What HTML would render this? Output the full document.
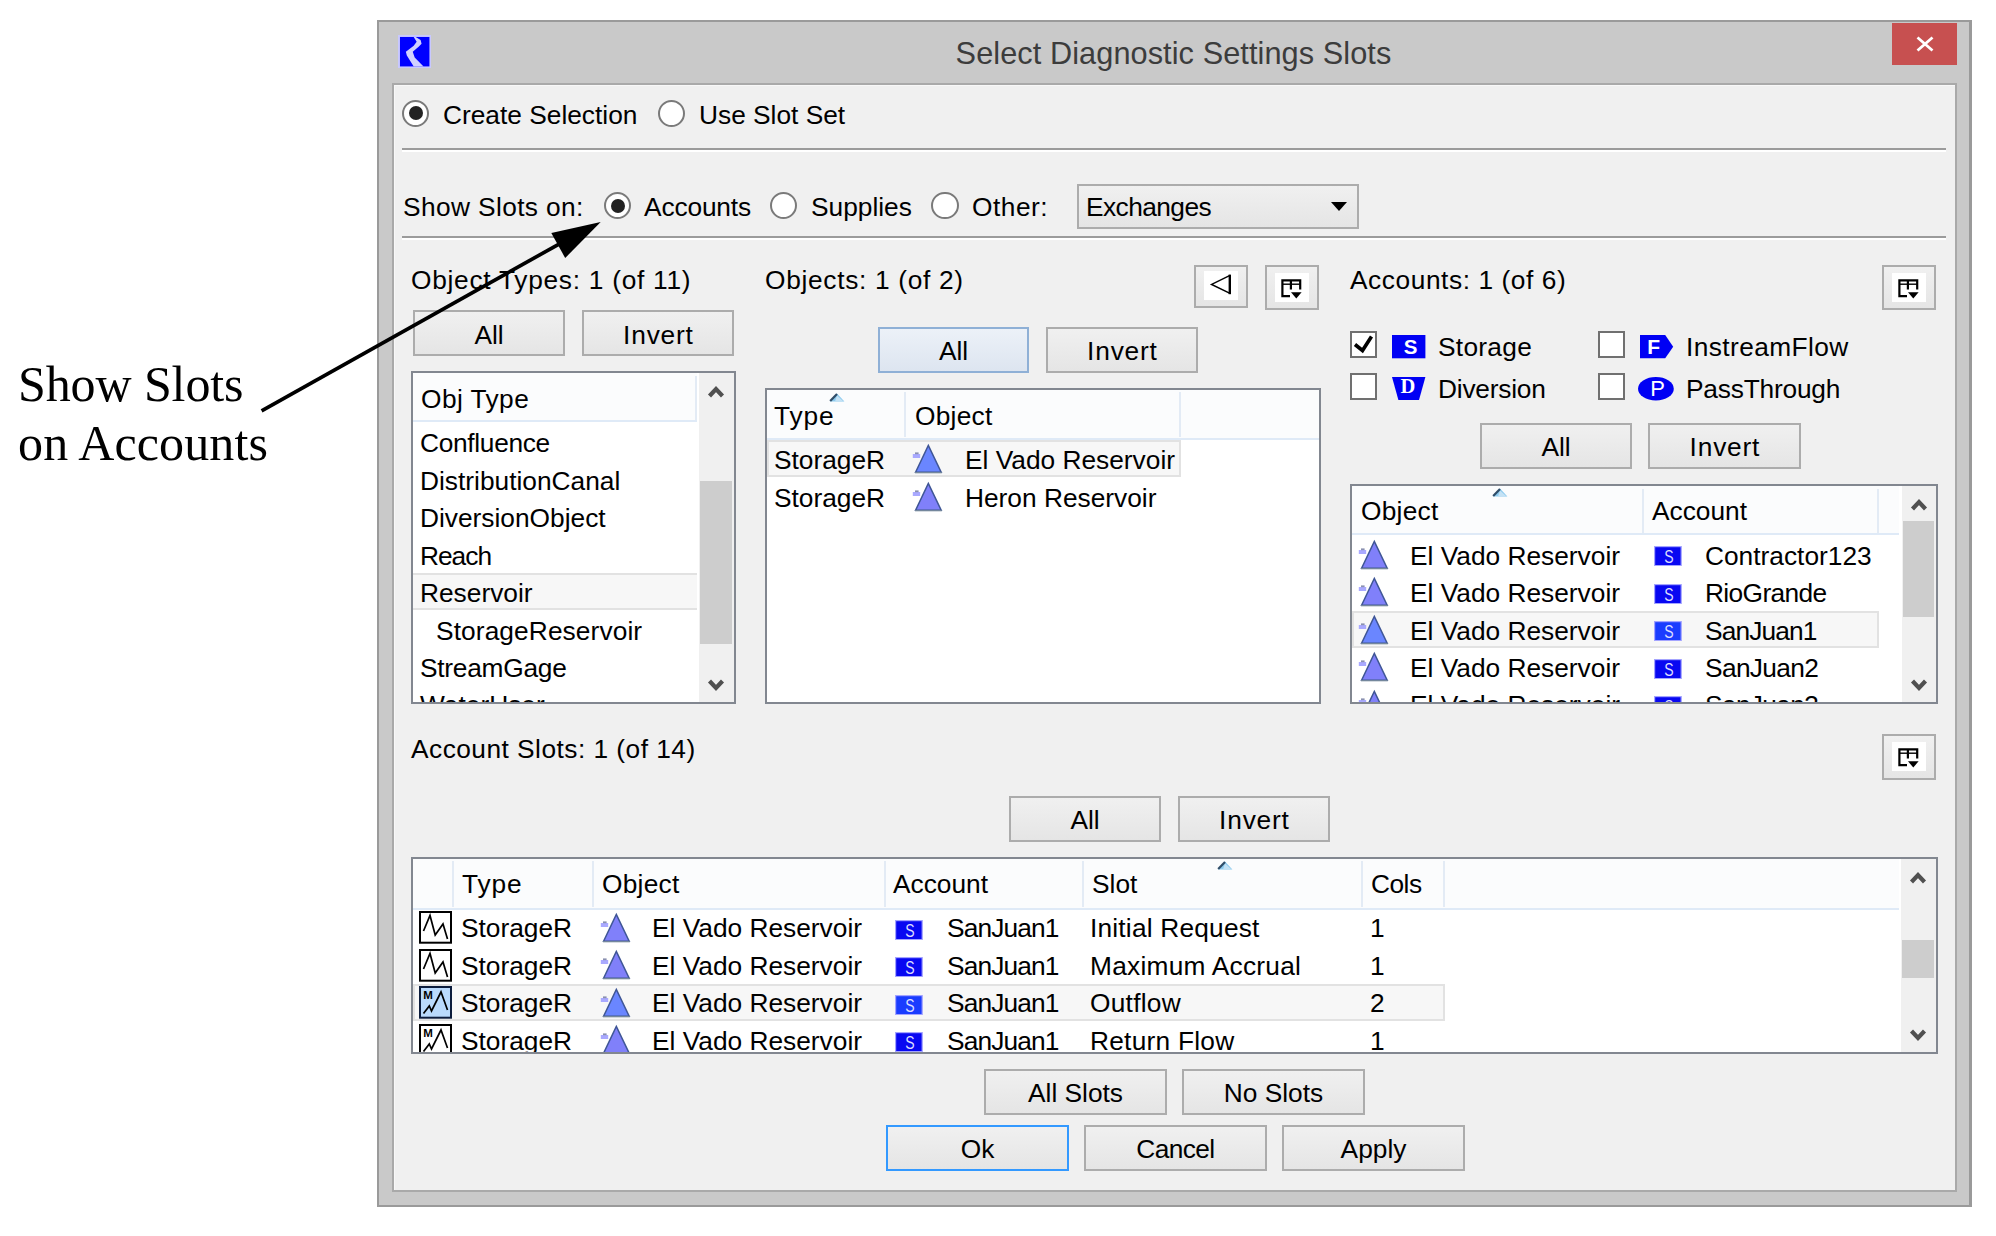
<!DOCTYPE html>
<html><head><meta charset="utf-8"><title>Select Diagnostic Settings Slots</title>
<style>
html,body{margin:0;padding:0;background:#fff;overflow:hidden;}
#root{position:relative;width:1996px;height:1236px;overflow:hidden;background:#fff;font-family:"Liberation Sans",sans-serif;}
#root div,#root span,#root svg.a{position:absolute;box-sizing:border-box;}
.t{font-size:26.3px;line-height:32px;height:32px;color:#000;white-space:pre;}
.c{text-align:center;}
.title{font-size:30.7px;color:#3c3c3c;}
.serif{font-family:"Liberation Serif",serif;font-size:50px;line-height:60px;height:60px;color:#000;white-space:pre;}
.btn{border:2px solid #acacac;background:linear-gradient(#f0f0f0,#e5e5e5);}
.btn.hot{border-color:#8fb0d6;background:linear-gradient(#ecf1f8,#dde5f0);}
.btn.def{border-color:#3399ff;}
.radio{border:2px solid #7a7a7a;border-radius:50%;background:#fff;}
.radio i{position:absolute;left:4.7px;top:4.7px;width:14px;height:14px;border-radius:50%;background:#222;}
.chk{border:2px solid #707070;background:#fff;}
.list{border:2px solid #828790;background:#fff;overflow:hidden;}
.hdr{background:#fbfcfd;border-bottom:2px solid #dfeaf7;}
.sel{background:#f7f7f7;border:2px solid #e2e2e2;}
.vsep{background:#e3ebf5;}
.sb{background:#f0f0f0;}
.thumb{background:#cdcdcd;}
.hline{background:#fff;border-top:2px solid #9b9b9b;}

</style></head><body>
<div id="root">
<div style="left:377px;top:20px;width:1595px;height:1187px;background:#c9c9c9;border:2px solid #9a9a9a;border-right-width:3px;"></div>
<div style="left:392px;top:83px;width:1565px;height:1109px;background:#f0f0f0;border:2px solid #a9a9a9;box-shadow:inset 1px 1px 0 #f8f8f8;"></div>
<svg class="a" style="left:398px;top:35px" width="33.4" height="33.4" viewBox="0 0 34 34"><rect width="34" height="34" fill="#c8c8ff"/><rect x="2" y="2" width="30" height="30" fill="#0000ff"/><path d="M18 2 L23 5 L24 9 L21 12 L15 17 L17 23 L26 32 L16 32 L9 21 L8 17 L16 11 L19 7 L16 2 Z" fill="#d0d0ff"/></svg>
<span class="t title c" style="left:391px;width:1565px;top:38px;letter-spacing:0.08px;">Select Diagnostic Settings Slots</span>
<div style="left:1892px;top:23px;width:64.5px;height:41.5px;background:#c75050;"></div>
<svg class="a" style="left:1915.5px;top:36px" width="18" height="16" viewBox="0 0 18 16"><path d="M1.5 1.5 L16.5 14.5 M16.5 1.5 L1.5 14.5" stroke="#fff" stroke-width="2.8" fill="none"/></svg>
<div class="radio" style="left:402px;top:99.8px;width:27.4px;height:27.4px;"><i></i></div>
<span class="t" style="left:443px;top:99px;">Create Selection</span>
<div class="radio" style="left:658px;top:99.8px;width:27.4px;height:27.4px;"></div>
<span class="t" style="left:699px;top:99px;">Use Slot Set</span>
<div class="hline" style="left:402px;top:148px;width:1544px;height:4px;"></div>
<span class="t" style="left:403px;top:191px;letter-spacing:0.385px;">Show Slots on:</span>
<div class="radio" style="left:604px;top:192px;width:27.4px;height:27.4px;"><i></i></div>
<span class="t" style="left:644px;top:191px;letter-spacing:-0.143px;">Accounts</span>
<div class="radio" style="left:770px;top:192px;width:27.4px;height:27.4px;"></div>
<span class="t" style="left:811px;top:191px;">Supplies</span>
<div class="radio" style="left:931.3px;top:192px;width:27.4px;height:27.4px;"></div>
<span class="t" style="left:972px;top:191px;letter-spacing:0.500px;">Other:</span>
<div class="btn" style="left:1077px;top:183.5px;width:281.5px;height:45.5px;"></div>
<span class="t" style="left:1086px;top:191px;letter-spacing:-0.562px;">Exchanges</span>
<svg class="a" style="left:1330px;top:202px" width="18" height="10" viewBox="0 0 18 10"><path d="M1 0 L17 0 L9 9 Z" fill="#000"/></svg>
<div class="hline" style="left:402px;top:236px;width:1544px;height:4px;"></div>
<span class="t" style="left:411px;top:264px;letter-spacing:0.727px;">Object Types: 1 (of 11)</span>
<span class="t" style="left:765px;top:264px;letter-spacing:0.688px;">Objects: 1 (of 2)</span>
<span class="t" style="left:1350px;top:264px;letter-spacing:0.565px;">Accounts: 1 (of 6)</span>
<div class="btn" style="left:1194.2px;top:264.8px;width:53.8px;height:43.2px;"></div>
<div style="left:1204.4px;top:270.9px;width:33.6px;height:29.2px;background:#fff;"></div>
<svg class="a" style="left:1208px;top:272px" width="26" height="26" viewBox="0 0 26 26"><path d="M22 3.4 L3.6 12.4 L22 21.4" stroke="#000" stroke-width="1.5" fill="none"/><path d="M21.8 2.6 V22.2" stroke="#000" stroke-width="2.4" fill="none"/></svg>
<div class="btn" style="left:1265px;top:264.8px;width:54px;height:45.5px;"></div>
<div style="left:1275px;top:272.8px;width:33.5px;height:29.2px;background:#fff;"></div>
<svg class="a" style="left:1280px;top:277.8px" width="24" height="22" viewBox="0 0 24 22"><path d="M2.4 2.4 H20.2 V11.5 M2.4 1.3 V18.2 H10 M10.9 2.4 V11.5" stroke="#000" stroke-width="2.2" fill="none"/><path d="M2.4 6.2 H20.2" stroke="#000" stroke-width="1.4" fill="none"/><path d="M11 14.3 H21.6 L16.3 20.4 Z" fill="#000"/></svg>
<div class="btn" style="left:1882px;top:264.8px;width:54px;height:45.5px;"></div>
<div style="left:1892px;top:272.8px;width:33.5px;height:29.2px;background:#fff;"></div>
<svg class="a" style="left:1897px;top:277.8px" width="24" height="22" viewBox="0 0 24 22"><path d="M2.4 2.4 H20.2 V11.5 M2.4 1.3 V18.2 H10 M10.9 2.4 V11.5" stroke="#000" stroke-width="2.2" fill="none"/><path d="M2.4 6.2 H20.2" stroke="#000" stroke-width="1.4" fill="none"/><path d="M11 14.3 H21.6 L16.3 20.4 Z" fill="#000"/></svg>
<div class="btn" style="left:1882px;top:734px;width:54px;height:45.5px;"></div>
<div style="left:1892px;top:742px;width:33.5px;height:29.2px;background:#fff;"></div>
<svg class="a" style="left:1897px;top:747px" width="24" height="22" viewBox="0 0 24 22"><path d="M2.4 2.4 H20.2 V11.5 M2.4 1.3 V18.2 H10 M10.9 2.4 V11.5" stroke="#000" stroke-width="2.2" fill="none"/><path d="M2.4 6.2 H20.2" stroke="#000" stroke-width="1.4" fill="none"/><path d="M11 14.3 H21.6 L16.3 20.4 Z" fill="#000"/></svg>
<div class="btn " style="left:413px;top:310px;width:152px;height:46px;"></div>
<span class="t c" style="left:413px;width:152px;top:319px;">All</span>
<div class="btn " style="left:582px;top:310px;width:152px;height:46px;"></div>
<span class="t c" style="left:582px;width:152px;top:319px;letter-spacing:0.800px;padding-left:0.800px;">Invert</span>
<div class="list" style="left:411px;top:371px;width:324.7px;height:333px;"></div>
<div class="hdr" style="left:413px;top:373px;width:284px;height:49px;"></div>
<div class="vsep" style="left:695px;top:376px;width:2px;height:44px;"></div>
<span class="t" style="left:421px;top:383px;letter-spacing:0.429px;">Obj Type</span>
<div class="sel" style="left:413px;top:573px;width:284px;height:37px;border-left:0;border-right:0;"></div>
<span class="t" style="left:420px;top:427px;letter-spacing:-0.311px;">Confluence</span>
<span class="t" style="left:420px;top:465px;">DistributionCanal</span>
<span class="t" style="left:420px;top:502px;">DiversionObject</span>
<span class="t" style="left:420px;top:540px;letter-spacing:-1.000px;">Reach</span>
<span class="t" style="left:420px;top:577px;">Reservoir</span>
<span class="t" style="left:436px;top:615px;letter-spacing:0.100px;">StorageReservoir</span>
<span class="t" style="left:420px;top:652px;letter-spacing:-0.256px;">StreamGage</span>
<div style="left:413px;top:686px;width:284px;height:16px;overflow:hidden"><span class="t" style="left:7px;top:3px">WaterUser</span></div>
<div class="sb" style="left:699px;top:373px;width:34.7px;height:329px;"></div>
<div class="thumb" style="left:699.5px;top:481px;width:32.7px;height:163px;"></div>
<svg class="a" style="left:707.35px;top:384px" width="18" height="14" viewBox="0 0 18 14"><path d="M2.5 12 L9 5 L15.5 12" stroke="#505050" stroke-width="4.2" fill="none"/></svg>
<svg class="a" style="left:707.35px;top:678.5px" width="18" height="14" viewBox="0 0 18 14"><path d="M2.5 2 L9 9 L15.5 2" stroke="#505050" stroke-width="4.2" fill="none"/></svg>
<div class="btn hot" style="left:878px;top:327px;width:151px;height:46px;"></div>
<span class="t c" style="left:878px;width:151px;top:335px;">All</span>
<div class="btn " style="left:1046px;top:327px;width:152px;height:46px;"></div>
<span class="t c" style="left:1046px;width:152px;top:335px;letter-spacing:0.800px;padding-left:0.800px;">Invert</span>
<div class="list" style="left:765px;top:388px;width:556px;height:316px;"></div>
<div class="hdr" style="left:767px;top:390px;width:552px;height:49.6px;"></div>
<div class="vsep" style="left:904px;top:392px;width:2px;height:45px;"></div>
<div class="vsep" style="left:1179px;top:392px;width:2px;height:45px;"></div>
<span class="t" style="left:774px;top:400px;letter-spacing:0.833px;">Type</span>
<span class="t" style="left:915px;top:400px;letter-spacing:0.240px;">Object</span>
<svg class="a" style="left:828.9px;top:392.5px" width="16" height="9" viewBox="0 0 16 9"><path d="M0.8 8.6 L8 0.6 L15.4 8.6 Z" fill="#8ccaee"/><path d="M8 2.5 L14.6 8.6 H6 Z" fill="#c4e2f5"/><path d="M1.2 8 L8 0.9" stroke="#2f4d68" stroke-width="2.2" fill="none"/></svg>
<div class="sel" style="left:767px;top:440.2px;width:414px;height:36.6px;"></div>
<span class="t" style="left:774px;top:444px;">StorageR</span>
<svg class="a" style="left:911px;top:442px" width="34" height="34" viewBox="0 0 34 34"><rect x="1.8" y="12" width="7.4" height="4" fill="#a9a9ff"/><rect x="4" y="10.4" width="3.6" height="1.8" fill="#8a90b0"/><path d="M17.3 3.4 L30.2 30.2 L4.6 30.2 Z" fill="#6a86ff" stroke="#3f5696" stroke-width="1.5" stroke-linejoin="miter"/><path d="M4 30.6 H30.8" stroke="#74879c" stroke-width="1.4"/></svg>
<span class="t" style="left:965px;top:444px;">El Vado Reservoir</span>
<span class="t" style="left:774px;top:482px;">StorageR</span>
<svg class="a" style="left:911px;top:479.6px" width="34" height="34" viewBox="0 0 34 34"><rect x="1.8" y="12" width="7.4" height="4" fill="#a9a9ff"/><rect x="4" y="10.4" width="3.6" height="1.8" fill="#8a90b0"/><path d="M17.3 3.4 L30.2 30.2 L4.6 30.2 Z" fill="#8080fa" stroke="#3f5696" stroke-width="1.5" stroke-linejoin="miter"/><path d="M4 30.6 H30.8" stroke="#74879c" stroke-width="1.4"/></svg>
<span class="t" style="left:965px;top:482px;">Heron Reservoir</span>
<div class="chk" style="left:1350.3px;top:331.2px;width:27px;height:27px;"><svg width="23" height="23" viewBox="0 0 23 23" style="position:absolute;left:0;top:0"><path d="M3 11.5 L10.5 17.5 L19.5 3.5" fill="none" stroke="#000" stroke-width="3.6"/></svg></div>
<svg class="a" style="left:1391.9px;top:335px" width="34" height="24" viewBox="0 0 34 24"><rect x="0" y="0" width="33.4" height="23.3" fill="#0000f4"/><text x="18.6" y="18.8" text-anchor="middle" font-family="Liberation Sans, sans-serif" font-weight="bold" font-size="20.5" fill="#fff">S</text></svg>
<span class="t" style="left:1438px;top:331px;letter-spacing:0.283px;">Storage</span>
<div class="chk" style="left:1598.2px;top:331.2px;width:27px;height:27px;"></div>
<svg class="a" style="left:1639.9px;top:335px" width="34" height="24" viewBox="0 0 34 24"><path d="M0 0 H25.2 L33.2 11.7 L25.2 23.3 H0 Z" fill="#0000f4"/><text x="13.7" y="18.8" text-anchor="middle" font-family="Liberation Sans, sans-serif" font-weight="bold" font-size="21" fill="#fff">F</text></svg>
<span class="t" style="left:1686px;top:331px;letter-spacing:0.400px;">InstreamFlow</span>
<div class="chk" style="left:1350.3px;top:373.1px;width:27px;height:27px;"></div>
<svg class="a" style="left:1391.9px;top:377px" width="34" height="24" viewBox="0 0 34 24"><path d="M0 0 H33.4 L27 23 H6.4 Z" fill="#0000f4"/><text x="15.8" y="16.4" text-anchor="middle" font-family="Liberation Serif, serif" font-weight="bold" font-size="20.5" fill="#fff">D</text></svg>
<span class="t" style="left:1438px;top:373px;letter-spacing:-0.212px;">Diversion</span>
<div class="chk" style="left:1598.2px;top:373.1px;width:27px;height:27px;"></div>
<svg class="a" style="left:1637.7px;top:376.8px" width="36" height="24" viewBox="0 0 36 24"><ellipse cx="17.9" cy="11.7" rx="17.9" ry="11.7" fill="#0000f4"/><text x="19.5" y="19.3" text-anchor="middle" font-family="Liberation Sans, sans-serif" font-weight="normal" font-size="22" fill="#fff">P</text></svg>
<span class="t" style="left:1686px;top:373px;letter-spacing:-0.200px;">PassThrough</span>
<div class="btn " style="left:1480px;top:423px;width:152px;height:46px;"></div>
<span class="t c" style="left:1480px;width:152px;top:431px;">All</span>
<div class="btn " style="left:1648px;top:423px;width:153px;height:46px;"></div>
<span class="t c" style="left:1648px;width:153px;top:431px;letter-spacing:0.800px;padding-left:0.800px;">Invert</span>
<div class="list" style="left:1350px;top:484px;width:587.5px;height:220px;"></div>
<div class="hdr" style="left:1352px;top:486px;width:547px;height:49px;"></div>
<div class="vsep" style="left:1642px;top:489px;width:2px;height:44px;"></div>
<div class="vsep" style="left:1877px;top:489px;width:2px;height:44px;"></div>
<span class="t" style="left:1361px;top:495px;letter-spacing:0.240px;">Object</span>
<span class="t" style="left:1652px;top:495px;">Account</span>
<svg class="a" style="left:1491.6px;top:488px" width="16" height="9" viewBox="0 0 16 9"><path d="M0.8 8.6 L8 0.6 L15.4 8.6 Z" fill="#8ccaee"/><path d="M8 2.5 L14.6 8.6 H6 Z" fill="#c4e2f5"/><path d="M1.2 8 L8 0.9" stroke="#2f4d68" stroke-width="2.2" fill="none"/></svg>
<div class="sel" style="left:1352px;top:610.5px;width:527px;height:37.5px;"></div>
<svg class="a" style="left:1356.7px;top:537.5px" width="34" height="34" viewBox="0 0 34 34"><rect x="1.8" y="12" width="7.4" height="4" fill="#a9a9ff"/><rect x="4" y="10.4" width="3.6" height="1.8" fill="#8a90b0"/><path d="M17.3 3.4 L30.2 30.2 L4.6 30.2 Z" fill="#8080fa" stroke="#3f5696" stroke-width="1.5" stroke-linejoin="miter"/><path d="M4 30.6 H30.8" stroke="#74879c" stroke-width="1.4"/></svg>
<span class="t" style="left:1410px;top:540px;">El Vado Reservoir</span>
<svg class="a" style="left:1654.3px;top:546.3px" width="28" height="20" viewBox="0 0 28 20"><rect x="0.6" y="0.6" width="26.6" height="19" fill="#0808f2" stroke="#a4a4ff" stroke-width="1.2"/><text transform="translate(15 16.6) scale(0.74 1)" x="0" y="0" text-anchor="middle" font-family="Liberation Sans, sans-serif" font-size="19" fill="#dcdcff">S</text></svg>
<span class="t" style="left:1705px;top:540px;">Contractor123</span>
<svg class="a" style="left:1356.7px;top:575px" width="34" height="34" viewBox="0 0 34 34"><rect x="1.8" y="12" width="7.4" height="4" fill="#a9a9ff"/><rect x="4" y="10.4" width="3.6" height="1.8" fill="#8a90b0"/><path d="M17.3 3.4 L30.2 30.2 L4.6 30.2 Z" fill="#8080fa" stroke="#3f5696" stroke-width="1.5" stroke-linejoin="miter"/><path d="M4 30.6 H30.8" stroke="#74879c" stroke-width="1.4"/></svg>
<span class="t" style="left:1410px;top:577px;">El Vado Reservoir</span>
<svg class="a" style="left:1654.3px;top:583.8px" width="28" height="20" viewBox="0 0 28 20"><rect x="0.6" y="0.6" width="26.6" height="19" fill="#0808f2" stroke="#a4a4ff" stroke-width="1.2"/><text transform="translate(15 16.6) scale(0.74 1)" x="0" y="0" text-anchor="middle" font-family="Liberation Sans, sans-serif" font-size="19" fill="#dcdcff">S</text></svg>
<span class="t" style="left:1705px;top:577px;letter-spacing:-0.625px;">RioGrande</span>
<svg class="a" style="left:1356.7px;top:612.5px" width="34" height="34" viewBox="0 0 34 34"><rect x="1.8" y="12" width="7.4" height="4" fill="#a9a9ff"/><rect x="4" y="10.4" width="3.6" height="1.8" fill="#8a90b0"/><path d="M17.3 3.4 L30.2 30.2 L4.6 30.2 Z" fill="#6a86ff" stroke="#3f5696" stroke-width="1.5" stroke-linejoin="miter"/><path d="M4 30.6 H30.8" stroke="#74879c" stroke-width="1.4"/></svg>
<span class="t" style="left:1410px;top:615px;">El Vado Reservoir</span>
<svg class="a" style="left:1654.3px;top:621.3px" width="28" height="20" viewBox="0 0 28 20"><rect x="0.6" y="0.6" width="26.6" height="19" fill="#1a3cff" stroke="#a4a4ff" stroke-width="1.2"/><text transform="translate(15 16.6) scale(0.74 1)" x="0" y="0" text-anchor="middle" font-family="Liberation Sans, sans-serif" font-size="19" fill="#dcdcff">S</text></svg>
<span class="t" style="left:1705px;top:615px;letter-spacing:-0.857px;">SanJuan1</span>
<svg class="a" style="left:1356.7px;top:650px" width="34" height="34" viewBox="0 0 34 34"><rect x="1.8" y="12" width="7.4" height="4" fill="#a9a9ff"/><rect x="4" y="10.4" width="3.6" height="1.8" fill="#8a90b0"/><path d="M17.3 3.4 L30.2 30.2 L4.6 30.2 Z" fill="#8080fa" stroke="#3f5696" stroke-width="1.5" stroke-linejoin="miter"/><path d="M4 30.6 H30.8" stroke="#74879c" stroke-width="1.4"/></svg>
<span class="t" style="left:1410px;top:652px;">El Vado Reservoir</span>
<svg class="a" style="left:1654.3px;top:658.8px" width="28" height="20" viewBox="0 0 28 20"><rect x="0.6" y="0.6" width="26.6" height="19" fill="#0808f2" stroke="#a4a4ff" stroke-width="1.2"/><text transform="translate(15 16.6) scale(0.74 1)" x="0" y="0" text-anchor="middle" font-family="Liberation Sans, sans-serif" font-size="19" fill="#dcdcff">S</text></svg>
<span class="t" style="left:1705px;top:652px;letter-spacing:-0.643px;">SanJuan2</span>
<div style="left:1352.5px;top:687px;width:546px;height:15px;overflow:hidden"><span class="t" style="left:57.5px;top:2px">El Vado Reservoir</span><span class="t" style="left:352.5px;top:2px;letter-spacing:-0.643px;">SanJuan3</span><svg class="a" style="left:4.2px;top:0.5px" width="34" height="34" viewBox="0 0 34 34"><rect x="1.8" y="12" width="7.4" height="4" fill="#a9a9ff"/><rect x="4" y="10.4" width="3.6" height="1.8" fill="#8a90b0"/><path d="M17.3 3.4 L30.2 30.2 L4.6 30.2 Z" fill="#8080fa" stroke="#3f5696" stroke-width="1.5" stroke-linejoin="miter"/><path d="M4 30.6 H30.8" stroke="#74879c" stroke-width="1.4"/></svg><svg class="a" style="left:301.8px;top:9.3px" width="28" height="20" viewBox="0 0 28 20"><rect x="0.6" y="0.6" width="26.6" height="19" fill="#0808f2" stroke="#a4a4ff" stroke-width="1.2"/><text transform="translate(15 16.6) scale(0.74 1)" x="0" y="0" text-anchor="middle" font-family="Liberation Sans, sans-serif" font-size="19" fill="#dcdcff">S</text></svg></div>
<div class="sb" style="left:1902px;top:486px;width:33.5px;height:216px;"></div>
<div class="thumb" style="left:1902.5px;top:521px;width:31.5px;height:96px;"></div>
<svg class="a" style="left:1909.75px;top:497px" width="18" height="14" viewBox="0 0 18 14"><path d="M2.5 12 L9 5 L15.5 12" stroke="#505050" stroke-width="4.2" fill="none"/></svg>
<svg class="a" style="left:1909.75px;top:678.5px" width="18" height="14" viewBox="0 0 18 14"><path d="M2.5 2 L9 9 L15.5 2" stroke="#505050" stroke-width="4.2" fill="none"/></svg>
<span class="t" style="left:411px;top:733px;letter-spacing:0.470px;">Account Slots: 1 (of 14)</span>
<div class="btn " style="left:1009px;top:796px;width:152px;height:46px;"></div>
<span class="t c" style="left:1009px;width:152px;top:804px;">All</span>
<div class="btn " style="left:1178px;top:796px;width:152px;height:46px;"></div>
<span class="t c" style="left:1178px;width:152px;top:804px;letter-spacing:0.800px;padding-left:0.800px;">Invert</span>
<div class="list" style="left:411px;top:857px;width:1526.5px;height:197.3px;"></div>
<div class="hdr" style="left:413px;top:859px;width:1486px;height:50.5px;"></div>
<div class="vsep" style="left:452px;top:861px;width:2px;height:46px;"></div>
<div class="vsep" style="left:592px;top:861px;width:2px;height:46px;"></div>
<div class="vsep" style="left:884px;top:861px;width:2px;height:46px;"></div>
<div class="vsep" style="left:1082px;top:861px;width:2px;height:46px;"></div>
<div class="vsep" style="left:1361px;top:861px;width:2px;height:46px;"></div>
<div class="vsep" style="left:1443px;top:861px;width:2px;height:46px;"></div>
<span class="t" style="left:462px;top:868px;letter-spacing:0.833px;">Type</span>
<span class="t" style="left:602px;top:868px;letter-spacing:0.240px;">Object</span>
<span class="t" style="left:893px;top:868px;">Account</span>
<span class="t" style="left:1092px;top:868px;">Slot</span>
<span class="t" style="left:1371px;top:868px;letter-spacing:-0.500px;">Cols</span>
<svg class="a" style="left:1216.6px;top:861px" width="16" height="9" viewBox="0 0 16 9"><path d="M0.8 8.6 L8 0.6 L15.4 8.6 Z" fill="#8ccaee"/><path d="M8 2.5 L14.6 8.6 H6 Z" fill="#c4e2f5"/><path d="M1.2 8 L8 0.9" stroke="#2f4d68" stroke-width="2.2" fill="none"/></svg>
<div class="sel" style="left:413px;top:984px;width:1032px;height:37px;"></div>
<div style="left:413px;top:909.5px;width:1486px;height:142.8px;overflow:hidden">
<div style="left:0;top:-0.2px;width:1486px;height:38px"><svg class="a" style="left:6.2px;top:1.8px" width="33" height="33" viewBox="0 0 33 33"><rect x="1" y="1" width="31" height="30.7" fill="#fff" stroke="#000" stroke-width="2"/><path d="M4.5 20 L11 4.5 L16.2 24 L24 13 L28.5 28" stroke="#000" stroke-width="1.7" fill="none"/></svg><span class="t" style="left:48px;top:3px">StorageR</span><svg class="a" style="left:185.6px;top:1.5px" width="34" height="34" viewBox="0 0 34 34"><rect x="1.8" y="12" width="7.4" height="4" fill="#a9a9ff"/><rect x="4" y="10.4" width="3.6" height="1.8" fill="#8a90b0"/><path d="M17.3 3.4 L30.2 30.2 L4.6 30.2 Z" fill="#8080fa" stroke="#3f5696" stroke-width="1.5" stroke-linejoin="miter"/><path d="M4 30.6 H30.8" stroke="#74879c" stroke-width="1.4"/></svg><span class="t" style="left:239px;top:3px">El Vado Reservoir</span><svg class="a" style="left:482.3px;top:10.3px" width="28" height="20" viewBox="0 0 28 20"><rect x="0.6" y="0.6" width="26.6" height="19" fill="#0808f2" stroke="#a4a4ff" stroke-width="1.2"/><text transform="translate(15 16.6) scale(0.74 1)" x="0" y="0" text-anchor="middle" font-family="Liberation Sans, sans-serif" font-size="19" fill="#dcdcff">S</text></svg><span class="t" style="left:534px;top:3px;letter-spacing:-0.857px;">SanJuan1</span><span class="t" style="left:677px;top:3px;letter-spacing:0.193px;">Initial Request</span><span class="t" style="left:957px;top:3px">1</span></div>
<div style="left:0;top:37.3px;width:1486px;height:38px"><svg class="a" style="left:6.2px;top:1.8px" width="33" height="33" viewBox="0 0 33 33"><rect x="1" y="1" width="31" height="30.7" fill="#fff" stroke="#000" stroke-width="2"/><path d="M4.5 20 L11 4.5 L16.2 24 L24 13 L28.5 28" stroke="#000" stroke-width="1.7" fill="none"/></svg><span class="t" style="left:48px;top:3px">StorageR</span><svg class="a" style="left:185.6px;top:1.5px" width="34" height="34" viewBox="0 0 34 34"><rect x="1.8" y="12" width="7.4" height="4" fill="#a9a9ff"/><rect x="4" y="10.4" width="3.6" height="1.8" fill="#8a90b0"/><path d="M17.3 3.4 L30.2 30.2 L4.6 30.2 Z" fill="#8080fa" stroke="#3f5696" stroke-width="1.5" stroke-linejoin="miter"/><path d="M4 30.6 H30.8" stroke="#74879c" stroke-width="1.4"/></svg><span class="t" style="left:239px;top:3px">El Vado Reservoir</span><svg class="a" style="left:482.3px;top:10.3px" width="28" height="20" viewBox="0 0 28 20"><rect x="0.6" y="0.6" width="26.6" height="19" fill="#0808f2" stroke="#a4a4ff" stroke-width="1.2"/><text transform="translate(15 16.6) scale(0.74 1)" x="0" y="0" text-anchor="middle" font-family="Liberation Sans, sans-serif" font-size="19" fill="#dcdcff">S</text></svg><span class="t" style="left:534px;top:3px;letter-spacing:-0.857px;">SanJuan1</span><span class="t" style="left:677px;top:3px;letter-spacing:0.243px;">Maximum Accrual</span><span class="t" style="left:957px;top:3px">1</span></div>
<div style="left:0;top:74.8px;width:1486px;height:38px"><svg class="a" style="left:6.2px;top:1.8px" width="33" height="33" viewBox="0 0 33 33"><rect x="1" y="1" width="31" height="30.7" fill="#badafc" stroke="#0c1c3c" stroke-width="2"/><path d="M4.5 27.5 L10.3 20 L12.5 25 L22 6 L28.5 24" stroke="#000" stroke-width="1.7" fill="none"/><text x="4.2" y="13.2" font-family="Liberation Sans, sans-serif" font-size="11.5" font-weight="bold" fill="#000">M</text></svg><span class="t" style="left:48px;top:3px">StorageR</span><svg class="a" style="left:185.6px;top:1.5px" width="34" height="34" viewBox="0 0 34 34"><rect x="1.8" y="12" width="7.4" height="4" fill="#a9a9ff"/><rect x="4" y="10.4" width="3.6" height="1.8" fill="#8a90b0"/><path d="M17.3 3.4 L30.2 30.2 L4.6 30.2 Z" fill="#6a86ff" stroke="#3f5696" stroke-width="1.5" stroke-linejoin="miter"/><path d="M4 30.6 H30.8" stroke="#74879c" stroke-width="1.4"/></svg><span class="t" style="left:239px;top:3px">El Vado Reservoir</span><svg class="a" style="left:482.3px;top:10.3px" width="28" height="20" viewBox="0 0 28 20"><rect x="0.6" y="0.6" width="26.6" height="19" fill="#1a3cff" stroke="#a4a4ff" stroke-width="1.2"/><text transform="translate(15 16.6) scale(0.74 1)" x="0" y="0" text-anchor="middle" font-family="Liberation Sans, sans-serif" font-size="19" fill="#dcdcff">S</text></svg><span class="t" style="left:534px;top:3px;letter-spacing:-0.857px;">SanJuan1</span><span class="t" style="left:677px;top:3px;letter-spacing:0.250px;">Outflow</span><span class="t" style="left:957px;top:3px">2</span></div>
<div style="left:0;top:112.3px;width:1486px;height:38px"><svg class="a" style="left:6.2px;top:1.8px" width="33" height="33" viewBox="0 0 33 33"><rect x="1" y="1" width="31" height="30.7" fill="#fff" stroke="#000" stroke-width="2"/><path d="M4.5 27.5 L10.3 20 L12.5 25 L22 6 L28.5 24" stroke="#000" stroke-width="1.7" fill="none"/><text x="4.2" y="13.2" font-family="Liberation Sans, sans-serif" font-size="11.5" font-weight="bold" fill="#000">M</text></svg><span class="t" style="left:48px;top:3px">StorageR</span><svg class="a" style="left:185.6px;top:1.5px" width="34" height="34" viewBox="0 0 34 34"><rect x="1.8" y="12" width="7.4" height="4" fill="#a9a9ff"/><rect x="4" y="10.4" width="3.6" height="1.8" fill="#8a90b0"/><path d="M17.3 3.4 L30.2 30.2 L4.6 30.2 Z" fill="#8080fa" stroke="#3f5696" stroke-width="1.5" stroke-linejoin="miter"/><path d="M4 30.6 H30.8" stroke="#74879c" stroke-width="1.4"/></svg><span class="t" style="left:239px;top:3px">El Vado Reservoir</span><svg class="a" style="left:482.3px;top:10.3px" width="28" height="20" viewBox="0 0 28 20"><rect x="0.6" y="0.6" width="26.6" height="19" fill="#0808f2" stroke="#a4a4ff" stroke-width="1.2"/><text transform="translate(15 16.6) scale(0.74 1)" x="0" y="0" text-anchor="middle" font-family="Liberation Sans, sans-serif" font-size="19" fill="#dcdcff">S</text></svg><span class="t" style="left:534px;top:3px;letter-spacing:-0.857px;">SanJuan1</span><span class="t" style="left:677px;top:3px;letter-spacing:0.240px;">Return Flow</span><span class="t" style="left:957px;top:3px">1</span></div>
</div>
<div class="sb" style="left:1901px;top:859px;width:34.5px;height:193.3px;"></div>
<div class="thumb" style="left:1901.5px;top:940px;width:32.5px;height:38px;"></div>
<svg class="a" style="left:1909.25px;top:870px" width="18" height="14" viewBox="0 0 18 14"><path d="M2.5 12 L9 5 L15.5 12" stroke="#505050" stroke-width="4.2" fill="none"/></svg>
<svg class="a" style="left:1909.25px;top:1028.8px" width="18" height="14" viewBox="0 0 18 14"><path d="M2.5 2 L9 9 L15.5 2" stroke="#505050" stroke-width="4.2" fill="none"/></svg>
<div class="btn " style="left:984px;top:1069px;width:183px;height:46px;"></div>
<span class="t c" style="left:984px;width:183px;top:1077px;">All Slots</span>
<div class="btn " style="left:1182px;top:1069px;width:183px;height:46px;"></div>
<span class="t c" style="left:1182px;width:183px;top:1077px;">No Slots</span>
<div class="btn def" style="left:886px;top:1125px;width:183px;height:46px;"></div>
<span class="t c" style="left:886px;width:183px;top:1133px;">Ok</span>
<div class="btn " style="left:1084px;top:1125px;width:183px;height:46px;"></div>
<span class="t c" style="left:1084px;width:183px;top:1133px;letter-spacing:-0.600px;padding-left:-0.600px;">Cancel</span>
<div class="btn " style="left:1282px;top:1125px;width:183px;height:46px;"></div>
<span class="t c" style="left:1282px;width:183px;top:1133px;">Apply</span>
<span class="serif" style="left:18px;top:354px;letter-spacing:-0.1px">Show Slots</span>
<span class="serif" style="left:18px;top:413px;letter-spacing:0.14px">on Accounts</span>
<svg class="a" style="left:250px;top:210px" width="370" height="210" viewBox="250 210 370 210"><path d="M261.6 410.8 L572 236.8" stroke="#000" stroke-width="3.7" fill="none"/><path d="M600.7 221.9 L551.3 233 L565.2 258 Z" fill="#000"/></svg>
</div>
</body></html>
